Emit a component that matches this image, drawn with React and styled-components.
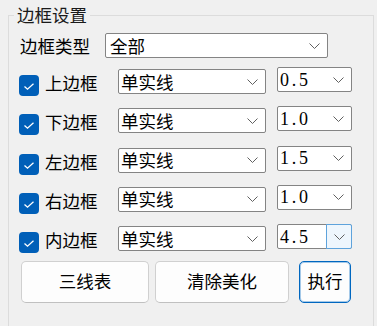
import React from "react";
import styled, { createGlobalStyle } from "styled-components";

const GlobalStyle = createGlobalStyle`
  html, body {
    margin: 0;
    background: #f0f0f0;
    overflow: hidden;
  }
  body {
    font-family: "Noto Sans CJK SC", "Noto Sans", sans-serif;
    color: #000;
  }
`;

const Page = styled.div`
  padding: 5px 0 0 8px;
`;

const Group = styled.fieldset`
  box-sizing: border-box;
  width: 366px;
  height: 322px;
  margin: 0;
  padding: 0 5px;
  border: 1px solid #dcdcdc;
  border-bottom-color: transparent;
  border-radius: 0;
`;

const Legend = styled.legend`
  padding: 0 3px;
  font-size: 17.5px;
  line-height: 20px;
  color: #1a1a1a;
`;

const Content = styled.div`
  padding: 8px 0 0 5px;
  display: flex;
  flex-direction: column;
`;

const TypeRow = styled.div`
  display: flex;
  align-items: center;
  height: 25px;
  margin-bottom: 9px;
`;

const TypeLabel = styled.span`
  width: 85px;
  padding-left: 1px;
  font-size: 17.5px;
  line-height: 20px;
`;

const LineRow = styled.div`
  display: flex;
  align-items: flex-start;
  height: 25px;
  & + & {
    margin-top: 14.25px;
  }
`;

const Check = styled.span`
  box-sizing: border-box;
  width: 20px;
  height: 21px;
  margin-top: 8px;
  border-radius: 4px;
  background: #005fb8;
  display: flex;
  align-items: center;
  justify-content: center;
`;

const LineLabel = styled.span`
  width: 73px;
  margin: 6px 0 0 6px;
  font-size: 17.5px;
  line-height: 20px;
`;

const Combo = styled.div`
  box-sizing: border-box;
  width: ${({ $w }) => $w}px;
  height: 25px;
  margin-top: ${({ $top }) => $top || 0}px;
  margin-left: ${({ $left }) => $left || 0}px;
  background: #fff;
  border: 1px solid #848484;
  border-radius: 2px;
  display: flex;
  align-items: stretch;
`;

const ComboText = styled.span`
  flex: 1;
  padding-left: ${({ $pad }) => $pad}px;
  display: flex;
  align-items: center;
  font-size: 17.5px;
  line-height: 20px;
  white-space: nowrap;
  overflow: hidden;
`;

const NumText = styled(ComboText)`
  font-family: "Liberation Serif", "Times New Roman", serif;
  font-size: 18px;
  letter-spacing: 2.8px;
`;

const Arrow = styled.span`
  box-sizing: border-box;
  width: 25px;
  display: flex;
  align-items: center;
  justify-content: center;
  ${({ $hot }) =>
    $hot &&
    `
    margin: -1px -1px -1px 0;
    width: 26px;
    background: #eef6fd;
    border: 1px solid #5ea3dc;
    border-radius: 0 2px 2px 0;
  `}
`;

const ButtonRow = styled.div`
  display: flex;
  margin-top: 12px;
  padding-left: 2px;
`;

const Button = styled.button`
  box-sizing: border-box;
  width: ${({ $w }) => $w}px;
  height: 42px;
  margin-left: ${({ $gap }) => $gap || 0}px;
  padding: 0 0 4px;
  background: #fdfdfd;
  border: 1px solid #d0d0d0;
  border-bottom-color: #c0c0c0;
  border-radius: 5px;
  font-family: "Noto Sans CJK SC", "Noto Sans", sans-serif;
  font-size: 17.5px;
  color: #000;
`;

const PrimaryButton = styled(Button)`
  border: 1px solid #0067c0;
  box-shadow: inset 0 0 0 1px rgba(0, 103, 192, 0.35);
`;

const Chevron = () => (
  <svg width="11" height="6" viewBox="0 0 11 6">
    <polyline points="0.5,0.5 5.5,5.5 10.5,0.5" fill="none" stroke="#606060" strokeWidth="1" />
  </svg>
);

const Tick = () => (
  <svg width="20" height="21" viewBox="0 0 20 21">
    <polyline points="5.5,11.5 8.5,14.2 14.5,8.8" fill="none" stroke="#fff" strokeWidth="1.3" />
  </svg>
);

const rows = [
  { name: "上边框", width: "0.5" },
  { name: "下边框", width: "1.0" },
  { name: "左边框", width: "1.5" },
  { name: "右边框", width: "1.0" },
  { name: "内边框", width: "4.5", hot: true },
];

export default function App() {
  return (
    <Page>
      <GlobalStyle />
      <Group>
        <Legend>边框设置</Legend>
        <Content>
          <TypeRow>
            <TypeLabel>边框类型</TypeLabel>
            <Combo $w={223}>
              <ComboText $pad={4}>全部</ComboText>
              <Arrow>
                <Chevron />
              </Arrow>
            </Combo>
          </TypeRow>
          {rows.map((r) => (
            <LineRow key={r.name}>
              <Check>
                <Tick />
              </Check>
              <LineLabel>{r.name}</LineLabel>
              <Combo $w={148} $top={2}>
                <ComboText $pad={2}>单实线</ComboText>
                <Arrow>
                  <Chevron />
                </Arrow>
              </Combo>
              <Combo $w={75} $left={11}>
                <NumText $pad={2}>{r.width}</NumText>
                <Arrow $hot={r.hot}>
                  <Chevron />
                </Arrow>
              </Combo>
            </LineRow>
          ))}
          <ButtonRow>
            <Button $w={128}>三线表</Button>
            <Button $w={134} $gap={6}>清除美化</Button>
            <PrimaryButton $w={52} $gap={10}>执行</PrimaryButton>
          </ButtonRow>
        </Content>
      </Group>
    </Page>
  );
}
